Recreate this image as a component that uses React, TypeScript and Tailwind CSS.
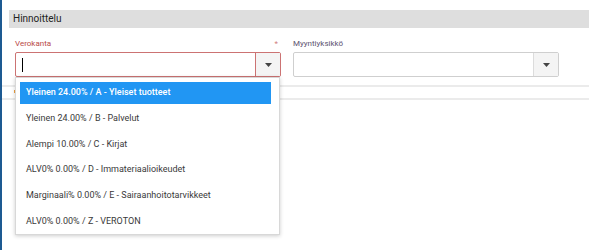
import React from "react";

const options = [
  "Yleinen 24.00% / A - Yleiset tuotteet",
  "Yleinen 24.00% / B - Palvelut",
  "Alempi 10.00% / C - Kirjat",
  "ALV0% 0.00% / D - Immateriaalioikeudet",
  "Marginaali% 0.00% / E - Sairaanhoitotarvikkeet",
  "ALV0% 0.00% / Z - VEROTON",
];

const Caret = () => (
  <svg width="7" height="4" viewBox="0 0 7 4">
    <path d="M0 0h7L3.5 4z" fill="#444" />
  </svg>
);

export default function App() {
  return (
    <div className="relative flex h-[250px] w-[589px] overflow-hidden bg-white font-['Roboto',sans-serif]">
      <div className="w-[2px] shrink-0 bg-[#1d5a92]" />
      <div className="flex-1 pt-[10px]">
        <div className="ml-[7px] h-[18px] bg-[#dedede] pl-[4px] text-[10px] leading-[18px] text-[#222]">
          Hinnoittelu
        </div>

        <div className="flex gap-[12px] pl-[13px] pt-[10px]">
          <div className="w-[266px]">
            <div className="flex justify-between pr-[3px] text-[8px] leading-[12px] text-[#b94a48]">
              <span>Verokanta</span>
              <span className="text-[#d08080]">*</span>
            </div>
            <div className="mt-[2px] flex h-[25px] rounded-[2px] border border-[#cc7373]">
              <div className="flex flex-1 items-center pl-[6px]">
                <div className="h-[14px] w-[1px] bg-black" />
              </div>
              <div className="flex w-[25px] items-center justify-center border-l border-[#cc7373] bg-[#f4f4f4]">
                <Caret />
              </div>
            </div>
          </div>

          <div className="w-[266px]">
            <div className="text-[8px] leading-[12px] text-[#5c5270]">Myyntiyksikkö</div>
            <div className="mt-[2px] flex h-[25px] rounded-[2px] border border-[#cfcfcf]">
              <div className="flex-1" />
              <div className="flex w-[25px] items-center justify-center border-l border-[#dcdcdc] bg-[#f4f4f4]">
                <Caret />
              </div>
            </div>
          </div>
        </div>

        <div className="mt-[8px] h-[2px] bg-[#ebebeb]" />
        <div className="ml-[12px] mt-[3px] h-[3px] w-[2px] bg-[#f0a040]" />
        <div className="mt-[5px] h-[2px] bg-[#ebebeb]" />
      </div>

      <div className="absolute left-[15px] top-[77px] w-[265px] border border-[#d8d8d8] bg-white pb-[1px] pl-[4px] pr-[8px] pt-[3.5px] shadow-[0_1px_4px_rgba(0,0,0,0.2)]">
        <div className="flex flex-col gap-[3.9px]">
          {options.map((o, i) => (
            <div
              key={o}
              className={
                i === 0
                  ? "flex h-[22px] items-center bg-[#2196f3] pl-[6px] text-[9px] font-medium text-white"
                  : "flex h-[22px] items-center pl-[6px] text-[9px] text-[#3a3a3a]"
              }
            >
              {o}
            </div>
          ))}
        </div>
      </div>
    </div>
  );
}
